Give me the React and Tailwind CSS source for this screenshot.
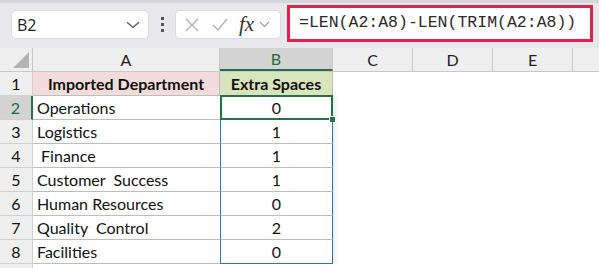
import React from "react";

const rows = [
  ["Operations", "0"],
  ["Logistics", "1"],
  ["\u00a0Finance", "1"],
  ["Customer\u00a0 Success", "1"],
  ["Human Resources", "0"],
  ["Quality\u00a0 Control", "2"],
  ["Facilities", "0"],
];

function Chevron({ className }) {
  return (
    <svg className={className} width="14" height="8" viewBox="0 0 14 8" fill="none">
      <path d="M1 1.2 L7 6.5 L13 1.2" stroke="#555" strokeWidth="1.3" />
    </svg>
  );
}

export default function App() {
  return (
    <div className="w-[599px] h-[268px] overflow-hidden bg-white" style={{ fontFamily: "Lato, 'Noto Sans', sans-serif" }}>
      {/* toolbar */}
      <div className="h-[48px] bg-[#e8e8ec] relative">
        <div className="h-[3px] bg-[#d6d6da]" />
        <div className="flex items-start pt-[7px] pl-[11px]">
          <div className="w-[138px] h-[29px] bg-white rounded-[5px] border border-[#dcdce0] flex items-center justify-between pl-[5px] pr-[8px]">
            <span className="text-[16px] text-[#222] leading-none" style={{ fontFamily: "'Open Sans', sans-serif" }}>B2</span>
            <Chevron />
          </div>
          <div className="w-[26px] h-[29px] flex flex-col items-center justify-center gap-[3px]">
            <div className="w-[3px] h-[3px] bg-[#555]" />
            <div className="w-[3px] h-[3px] bg-[#555]" />
            <div className="w-[3px] h-[3px] bg-[#555]" />
          </div>
          <div className="w-[106px] h-[29px] bg-white rounded-[5px] border border-[#dcdce0] flex items-center pl-[9px]">
            <svg width="14" height="14" viewBox="0 0 14 14">
              <path d="M1 1 L13 13 M13 1 L1 13" stroke="#b0b0b0" strokeWidth="1.2" />
            </svg>
            <svg className="ml-[13px]" width="16" height="13" viewBox="0 0 16 13">
              <path d="M1 7 L6 12 L15 1" stroke="#b0b0b0" strokeWidth="1.2" fill="none" />
            </svg>
            <span className="ml-[11px] text-[21px] italic leading-none text-[#333]" style={{ fontFamily: "'Liberation Serif', serif" }}>fx</span>
            <svg className="ml-[5px]" width="11" height="7" viewBox="0 0 11 7" fill="none">
              <path d="M1 1 L5.5 5.5 L10 1" stroke="#999" strokeWidth="1.1" />
            </svg>
          </div>
        </div>
        <div className="absolute left-[287px] top-[5px] w-[306px] h-[37px] border-[3px] border-[#e0224e] bg-white flex items-center pl-[9px]">
          <span className="text-[16.5px] text-[#2a2a2a] leading-none" style={{ fontFamily: "'Liberation Mono', monospace" }}>
            =LEN(A2:A8)-LEN(TRIM(A2:A8))
          </span>
        </div>
      </div>

      {/* column headers */}
      <div className="flex h-[24px] bg-[#efefef] text-[16px] text-[#222] border-b border-[#c8c8c8]">
        <div className="w-[33px] border-r border-[#c8c8c8] relative">
          <svg className="absolute right-[3px] bottom-[3px]" width="16" height="16" viewBox="0 0 16 16">
            <path d="M16 0 L16 16 L0 16 Z" fill="#b4b4b4" />
          </svg>
        </div>
        <div className="w-[187px] border-r border-[#c8c8c8] flex items-center justify-center">A</div>
        <div className="w-[113px] border-r border-[#c8c8c8] bg-[#d3d3d3] flex items-center justify-center text-[#1e6b40] border-b-2 border-b-[#217346]">B</div>
        <div className="w-[80px] border-r border-[#c8c8c8] flex items-center justify-center">C</div>
        <div className="w-[80px] border-r border-[#c8c8c8] flex items-center justify-center">D</div>
        <div className="w-[80px] border-r border-[#c8c8c8] flex items-center justify-center">E</div>
        <div className="flex-1" />
      </div>

      {/* row 1 */}
      <div className="flex h-[24px] text-[16px] text-[#111]">
        <div className="w-[33px] bg-[#efefef] border-r border-b border-[#d0d0d0] flex items-center justify-center">1</div>
        <div className="w-[187px] bg-[#f2dcdb] border-r border-b border-[#bdbdbd] flex items-center justify-center font-bold">Imported Department</div>
        <div className="w-[113px] bg-[#d8e4bc] border-r border-[#bdbdbd] flex items-center justify-center font-bold">Extra Spaces</div>
        <div className="flex-1" />
      </div>

      {rows.map(([name, val], i) => {
        const r = i + 2;
        const sel = r === 2;
        const last = r === 8;
        return (
          <div key={r} className="flex h-[24px] text-[16px] text-[#111]">
            <div
              className={
                sel
                  ? "w-[33px] bg-[#d3d3d3] border-r-2 border-r-[#217346] border-b border-b-[#d0d0d0] flex items-center justify-center text-[#1e6b40]"
                  : "w-[33px] bg-[#efefef] border-r border-b border-[#d0d0d0] flex items-center justify-center"
              }
            >
              {r}
            </div>
            <div className="w-[187px] border-b border-[#bdbdbd] flex items-center pl-[4px] whitespace-pre">{name}</div>
            <div
              className={
                last
                  ? "w-[113px] border-l border-r border-b border-[#3a6fc6] flex items-center justify-center relative"
                  : "w-[113px] border-l border-r border-b border-l-[#3a6fc6] border-r-[#3a6fc6] border-b-[#bdbdbd] flex items-center justify-center relative"
              }
            >
              {val}
              {sel && (
                <div className="absolute left-[-1px] top-[-1px] right-[-1px] bottom-[-1px] border-2 border-[#217346]">
                  <div className="absolute right-[-5px] bottom-[-5px] w-[7px] h-[7px] bg-[#217346] border border-white" />
                </div>
              )}
            </div>
            <div className="w-[6px] bg-gradient-to-r from-[#ececec] to-white" />
            <div className="flex-1" />
          </div>
        );
      })}
      <div className="flex h-[4px]">
        <div className="w-[33px] bg-[#efefef] border-r border-[#d0d0d0]" />
      </div>
    </div>
  );
}
